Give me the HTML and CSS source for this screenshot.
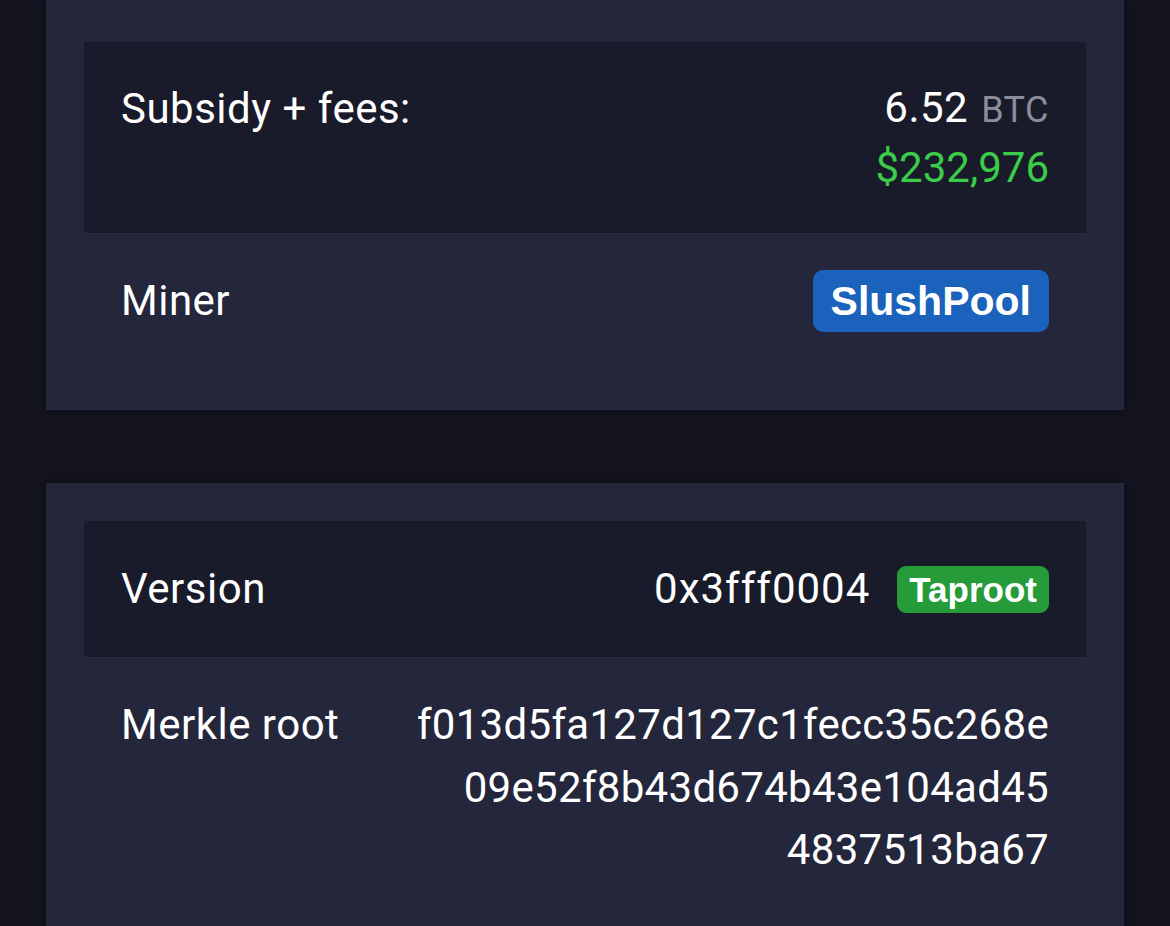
FILE: index.html
```html
<!DOCTYPE html>
<html>
<head>
<meta charset="utf-8">
<link rel="stylesheet" href="styles.css">
</head>
<body>
<div class="page">
  <section class="card card-first">
    <div class="row row-dark row-fees">
      <div class="label">Subsidy + fees:</div>
      <div class="value amount">
        <div class="btc">6.52 <span class="unit">BTC</span></div>
        <div class="fiat">$232,976</div>
      </div>
    </div>
    <div class="row row-line">
      <div class="label">Miner</div>
      <div class="value"><span class="badge badge-blue">SlushPool</span></div>
    </div>
  </section>

  <section class="card card-second">
    <div class="row row-dark row-version">
      <div class="label">Version</div>
      <div class="value version"><span class="version-num">0x3fff0004</span><span class="badge badge-green">Taproot</span></div>
    </div>
    <div class="row row-line">
      <div class="label">Merkle root</div>
      <div class="value hash">f013d5fa127d127c1fecc35c268e<br>09e52f8b43d674b43e104ad45<br>4837513ba67</div>
    </div>
  </section>
</div>
</body>
</html>
```
FILE: styles.css
```css
html, body {
  margin: 0;
  padding: 0;
  background: #13141f;
  color: #ffffff;
  font-family: "Roboto", "Inter", "Liberation Sans", sans-serif;
  font-size: 42px;
  letter-spacing: 0.5px;
}

.page {
  padding: 0 46px;
  display: flex;
  flex-direction: column;
  gap: 73px;
}

.card {
  background: #24263b;
  box-shadow: 0 0 8px rgba(0, 0, 0, 0.45);
  padding: 38px 38px 46px;
}

.card-first {
  padding-top: 42px;
  padding-bottom: 42px;
}

.card-second {
  min-height: 460px;
}

.row {
  display: flex;
  justify-content: space-between;
  align-items: flex-start;
  padding: 36px 37px;
  line-height: 62px;
}

.row-dark {
  background: #191a2a;
}

.row-line {
  border-top: 1px solid #272a40;
}

.label {
  white-space: nowrap;
}

.value {
  text-align: right;
}

.row-fees {
  padding-bottom: 35px;
}

.row-fees .value {
  line-height: 60px;
}

.btc, .fiat {
  height: 60px;
}

.unit {
  color: #8b8d9c;
  font-size: 36px;
  line-height: 0;
  margin-left: 2px;
}

.fiat {
  color: #3bcc49;
  letter-spacing: 0;
}

.row-version {
  padding-top: 37px;
  padding-bottom: 37px;
}

.version-num {
  letter-spacing: 1px;
}

.badge {
  display: inline-block;
  color: #fff;
  font-family: "Liberation Sans", "Arial", sans-serif;
  font-weight: bold;
  letter-spacing: 0;
}

.badge-blue {
  background: #1a62bb;
  font-size: 41px;
  line-height: 62px;
  height: 62px;
  vertical-align: top;
  padding: 0 18px;
  border-radius: 10px;
}

.version {
  display: flex;
  align-items: center;
  gap: 27px;
}

.badge-green {
  background: #269b39;
  font-size: 35px;
  line-height: 47px;
  padding: 0 12px;
  border-radius: 9px;
}

.hash {
  line-height: 62.5px;
  padding-left: 40px;
  letter-spacing: 0.3px;
}
```
